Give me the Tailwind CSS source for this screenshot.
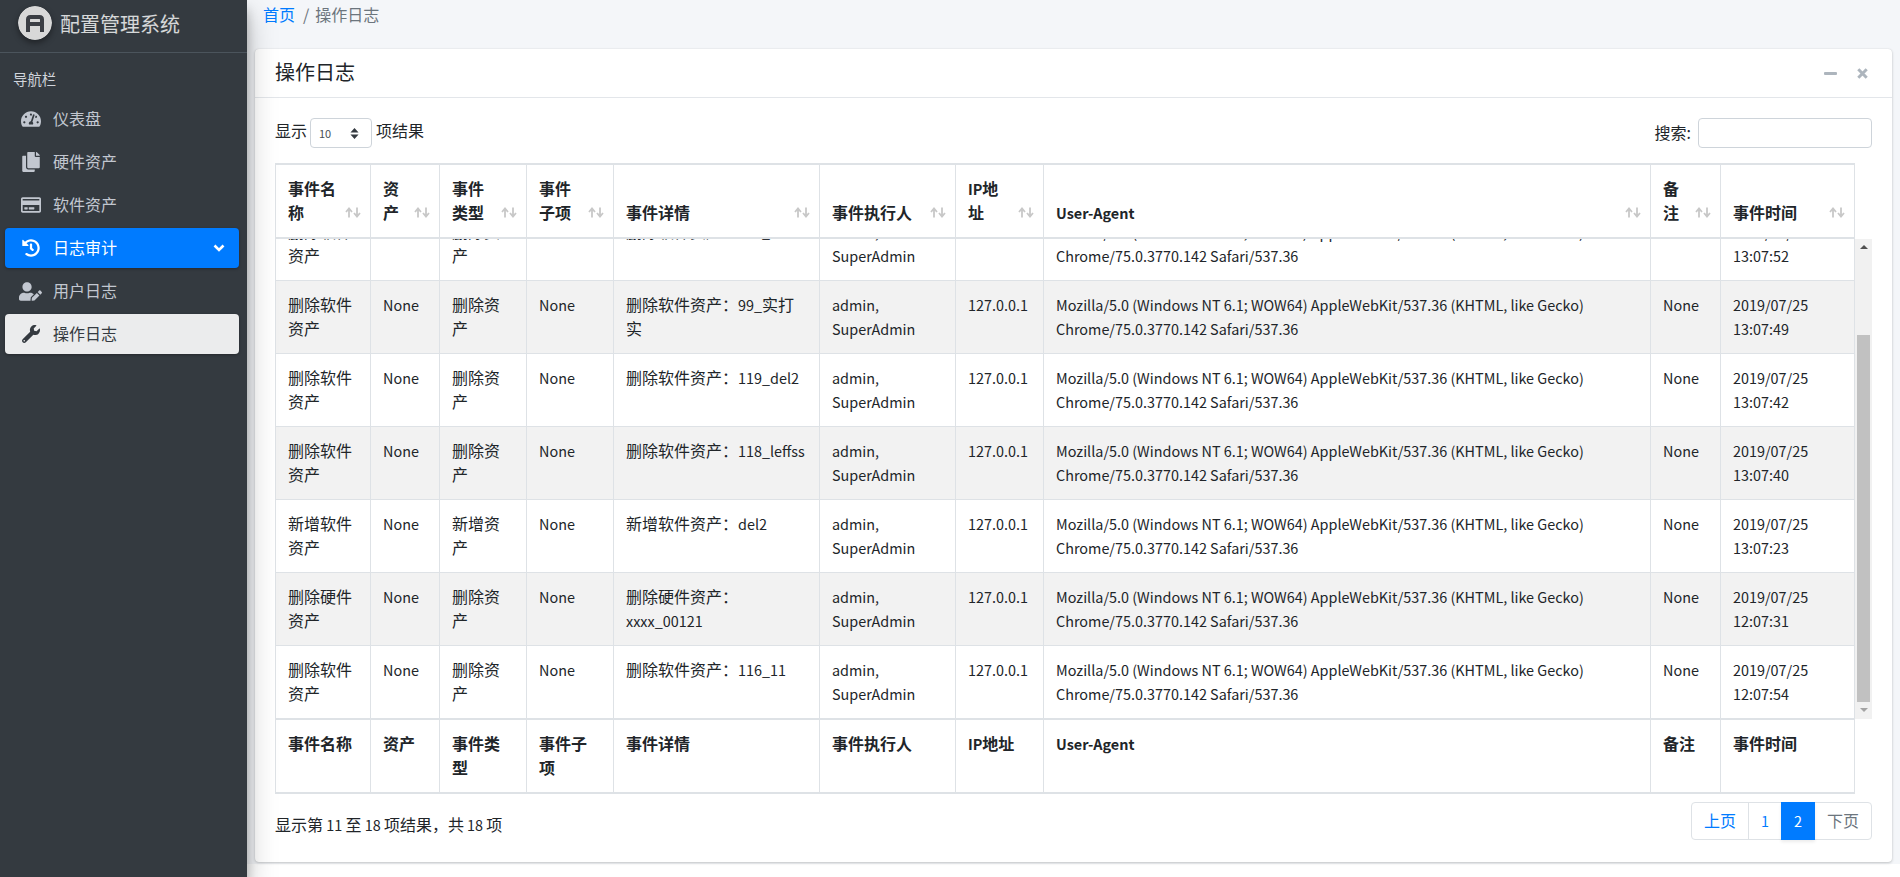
<!DOCTYPE html>
<html lang="zh">
<head>
<meta charset="utf-8">
<title>操作日志</title>
<script src="https://cdn.jsdelivr.net/npm/@tailwindcss/browser@4"></script>
</head>
<body class="bg-white">
<svg class="hidden"><symbol id="sort" viewBox="0 0 16 11"><path d="M4 10.5V2M1 5L4 1.5L7 5M12 0.5V9M9 6L12 9.5L15 6" fill="none" stroke="#c8c8c8" stroke-width="1.8"/></symbol></svg>
<div class="flex h-[877px] w-[1900px] overflow-hidden font-['Noto_Sans_CJK_SC',sans-serif] text-base leading-6 text-[#212529]">

  <aside class="relative z-10 h-full w-[247px] shrink-0 bg-[#343a40] shadow-[0_14px_28px_rgba(0,0,0,0.25),0_10px_10px_rgba(0,0,0,0.22)]">
    <div class="flex h-[53px] items-start border-b border-[#4b545c] pl-[18px] pt-[6px]">
      <svg viewBox="0 0 34 34" class="h-[34px] w-[34px] shrink-0 rounded-full shadow-[0_3px_6px_rgba(0,0,0,0.4)]">
        <circle cx="17" cy="17" r="17" fill="#d8d8d8"/>
        <path d="M10 26V13.5Q10 11 12.5 11H21.5Q24 11 24 13.5V26M10 18H24" fill="none" stroke="#3b3e44" stroke-width="4"/>
      </svg>
      <span class="ml-2 mt-[3px] text-xl leading-[30px] text-white/80">配置管理系统</span>
    </div>
    <div class="pl-[13px] pt-[15px] text-[14.4px] leading-[22px] text-[#d0d4db]">导航栏</div>
    <nav class="mt-[9px] pl-[5px] pr-[8px] text-[#c2c7d0]">
      <a class="mb-[3px] flex h-10 items-center rounded">
        <span class="flex w-[48px] justify-center pl-[3px]"><svg viewBox="0 0 576 512" class="h-[18px] w-[20px] fill-current"><path d="M288 32C128.94 32 0 160.94 0 320c0 52.8 14.25 102.26 39.06 144.8 5.61 9.62 16.3 15.2 27.44 15.2h443c11.14 0 21.83-5.58 27.44-15.2C561.75 422.26 576 372.8 576 320c0-159.06-128.94-288-288-288zm0 64c14.71 0 26.58 10.13 30.32 23.65-1.11 2.26-2.64 4.23-3.45 6.67l-9.22 27.67c-5.13 3.49-10.97 6.01-17.64 6.01-17.67 0-32-14.33-32-32S270.33 96 288 96zM96 384c-17.67 0-32-14.33-32-32s14.33-32 32-32 32 14.33 32 32-14.33 32-32 32zm48-160c-17.67 0-32-14.33-32-32s14.33-32 32-32 32 14.33 32 32-14.33 32-32 32zm246.77-72.41l-61.33 184C343.13 347.33 352 364.54 352 384c0 11.72-3.38 22.55-8.88 32H232.88c-5.5-9.45-8.88-20.28-8.88-32 0-33.94 26.5-61.43 59.9-63.59l61.34-184.01c4.17-12.56 17.73-19.45 30.36-15.17 12.57 4.19 19.35 17.79 15.17 30.36zm14.66 57.2l15.52-46.55c3.47-1.29 7.13-2.23 11.05-2.23 17.67 0 32 14.33 32 32s-14.33 32-32 32c-11.38-.01-20.89-6.28-26.57-15.22zM480 384c-17.67 0-32-14.33-32-32s14.33-32 32-32 32 14.33 32 32-14.33 32-32 32z"/></svg></span>
        <span class="pb-[2px]">仪表盘</span>
      </a>
      <a class="mb-[3px] flex h-10 items-center rounded">
        <span class="flex w-[48px] justify-center pl-[3px]"><svg viewBox="0 0 448 512" class="h-[20px] w-[18px] fill-current"><path d="M320 448v40c0 13.255-10.745 24-24 24H24c-13.255 0-24-10.745-24-24V120c0-13.255 10.745-24 24-24h72v296c0 30.879 25.121 56 56 56h168zm0-344V0H152c-13.255 0-24 10.745-24 24v368c0 13.255 10.745 24 24 24h272c13.255 0 24-10.745 24-24V128H344c-13.2 0-24-10.8-24-24zm120.971-31.029L375.029 7.029A24 24 0 0 0 358.059 0H352v96h96v-6.059a24 24 0 0 0-7.029-16.97z"/></svg></span>
        <span class="pb-[2px]">硬件资产</span>
      </a>
      <a class="mb-[3px] flex h-10 items-center rounded">
        <span class="flex w-[48px] justify-center pl-[3px]"><svg viewBox="0 0 576 512" class="h-[18px] w-[20px] fill-current"><path d="M527.9 32H48.1C21.5 32 0 53.5 0 80v352c0 26.5 21.5 48 48.1 48h479.8c26.6 0 48.1-21.5 48.1-48V80c0-26.5-21.5-48-48.1-48zM54.1 80h467.8c3.3 0 6 2.7 6 6v42H48.1V86c0-3.3 2.7-6 6-6zm467.8 352H54.1c-3.3 0-6-2.7-6-6V256h479.8v170c0 3.3-2.7 6-6 6zM192 332v40c0 6.6-5.4 12-12 12h-72c-6.6 0-12-5.4-12-12v-40c0-6.6 5.4-12 12-12h72c6.6 0 12 5.4 12 12zm192 0v40c0 6.6-5.4 12-12 12H236c-6.6 0-12-5.4-12-12v-40c0-6.6 5.4-12 12-12h136c6.6 0 12 5.4 12 12z"/></svg></span>
        <span class="pb-[2px]">软件资产</span>
      </a>
      <a class="mb-[3px] flex h-10 items-center rounded bg-[#007bff] text-white shadow-[0_1px_3px_rgba(0,0,0,0.3)]">
        <span class="flex w-[48px] justify-center pl-[3px]"><svg viewBox="0 0 512 512" class="h-[18px] w-[18px] fill-current"><path d="M504 255.531c.253 136.64-111.18 248.372-247.82 248.468-59.015.042-113.223-20.53-155.822-54.911-11.077-8.94-11.905-25.541-1.839-35.607l11.267-11.267c8.609-8.609 22.353-9.551 31.891-1.984C173.062 425.135 212.781 440 256 440c101.705 0 184-82.311 184-184 0-101.705-82.311-184-184-184-48.814 0-93.149 18.969-126.068 49.932l50.754 50.754c10.08 10.08 2.941 27.314-11.313 27.314H24c-8.837 0-16-7.163-16-16V38.627c0-14.254 17.234-21.393 27.314-11.314l49.372 49.372C129.209 34.136 189.552 8 256 8c136.81 0 247.747 110.78 248 247.531zm-180.912 78.784l9.823-12.63c8.138-10.463 6.253-25.542-4.21-33.679L288 256.349V152c0-13.255-10.745-24-24-24h-16c-13.255 0-24 10.745-24 24v135.651l65.409 50.874c10.463 8.137 25.541 6.253 33.679-4.21z"/></svg></span>
        <span class="flex-1 pb-[2px]">日志审计</span>
        <svg viewBox="0 0 12 8" class="mr-[14px] h-[8px] w-[12px]"><path d="M1.5 1.5L6 6L10.5 1.5" fill="none" stroke="#fff" stroke-width="2.6"/></svg>
      </a>
      <a class="mb-[3px] mt-px flex h-10 items-center rounded">
        <span class="flex w-[48px] justify-center pl-[3px]"><svg viewBox="0 0 640 512" class="h-[19px] w-[23px] fill-current"><path d="M224 256c70.7 0 128-57.3 128-128S294.7 0 224 0 96 57.3 96 128s57.3 128 128 128zm89.6 32h-16.7c-22.2 10.2-46.9 16-72.9 16s-50.6-5.8-72.9-16h-16.7C60.2 288 0 348.2 0 422.4V464c0 26.5 21.5 48 48 48h274.9c-2.4-6.8-3.4-14-2.6-21.3l6.8-60.9 1.2-11.1 7.9-7.9 77.3-77.3c-24.5-27.7-60-45.5-99.9-45.5zm45.3 145.3l-6.8 61c-1.1 10.2 7.5 18.8 17.6 17.6l60.9-6.8 137.9-137.9-71.7-71.7-137.9 137.8zM633 268.9L595.1 231c-9.3-9.3-24.5-9.3-33.8 0l-37.8 37.8-4.1 4.1 71.8 71.7 41.8-41.8c9.3-9.4 9.3-24.5 0-33.9z"/></svg></span>
        <span class="pb-[2px]">用户日志</span>
      </a>
      <a class="flex h-10 items-center rounded bg-[#ebeced] text-[#343a40] shadow-[0_1px_3px_rgba(0,0,0,0.3)]">
        <span class="flex w-[48px] justify-center pl-[3px]"><svg viewBox="0 0 512 512" class="h-[18px] w-[18px] fill-current"><path d="M507.73 109.1c-2.24-9.03-13.54-12.09-20.12-5.51l-74.36 74.36-67.88-11.31-11.31-67.88 74.36-74.36c6.62-6.62 3.43-17.9-5.66-20.16-47.38-11.74-99.55.91-136.58 37.93-39.64 39.64-50.55 97.1-34.05 147.2L18.74 402.76c-24.99 24.99-24.99 65.51 0 90.5 24.99 24.99 65.51 24.99 90.5 0l213.21-213.21c50.12 16.71 107.47 5.68 147.37-34.22 37.07-37.07 49.7-89.32 37.91-136.73zM64 472c-13.25 0-24-10.75-24-24 0-13.26 10.75-24 24-24s24 10.74 24 24c0 13.25-10.75 24-24 24z"/></svg></span>
        <span class="pb-[2px]">操作日志</span>
      </a>
    </nav>
  </aside>

  <main class="flex-1">
    <div class="h-[864px] bg-[#f4f6f9] px-2">
      <div class="flex h-[49px] items-start gap-2 pl-2 pt-[2px]">
        <a class="text-[#007bff]">首页</a>
        <span class="-mr-[2px] text-[#6c757d]">/</span>
        <span class="text-[#6c757d]">操作日志</span>
      </div>

      <section class="rounded bg-white shadow-[0_0_1px_rgba(0,0,0,0.125),0_1px_3px_rgba(0,0,0,0.2)]">
        <header class="flex h-[49px] items-center justify-between border-b border-[#e3e6ea] px-5">
          <h1 class="pb-[2px] text-xl leading-[30px]">操作日志</h1>
          <div class="flex items-center gap-5 pr-[4px]">
            <svg viewBox="0 0 13 3" class="h-[3px] w-[13px]"><rect width="13" height="3" rx="1" fill="#adb5bd"/></svg>
            <svg viewBox="0 0 11 11" class="h-[11px] w-[11px]"><path d="M1.3 1.3L9.7 9.7M9.7 1.3L1.3 9.7" stroke="#adb5bd" stroke-width="3" fill="none"/></svg>
          </div>
        </header>

        <div class="px-5 pb-[22px] pt-5">
          <div class="flex h-[30px] justify-between">
            <div class="flex h-6 items-center">
              <span>显示</span>
              <div class="relative ml-[3px] mr-[4px] mt-[6px] flex h-[30px] w-[62px] items-center rounded border border-[#ced4da] pl-[8px] text-[11px] text-[#495057]">
                10
                <svg viewBox="0 0 10 12" class="absolute right-[12px] top-[9px] h-[11px] w-[9px]"><path d="M5 0L9.5 5H0.5ZM5 12L0.5 7H9.5Z" fill="#343a40"/></svg>
              </div>
              <span>项结果</span>
            </div>
            <div class="flex items-center">
              <span class="pb-[2px]">搜索:</span>
              <div class="ml-[7px] h-[30px] w-[174px] rounded border border-[#ced4da] bg-white"></div>
            </div>
          </div>

          <div class="mt-[15px] w-[1597px]">
            <table class="w-[1580px] table-fixed border-separate border-spacing-0 font-bold [&_span]:text-[14.4px] [&_span]:leading-none [&_th]:relative [&_th]:border-b-2 [&_th]:border-r [&_th]:border-t-2 [&_th]:border-[#dee2e6] [&_th]:pb-[13px] [&_th]:pl-3 [&_th]:pr-[30px] [&_th]:pt-[11px] [&_th]:text-left [&_th]:align-bottom [&_th:first-child]:border-l [&_th>svg]:absolute [&_th>svg]:bottom-[19px] [&_th>svg]:right-[9px] [&_th>svg]:h-[11px] [&_th>svg]:w-[16px]">
              <colgroup><col class="w-[96px]"><col class="w-[69px]"><col class="w-[87px]"><col class="w-[87px]"><col class="w-[206px]"><col class="w-[136px]"><col class="w-[88px]"><col class="w-[607px]"><col class="w-[70px]"><col class="w-[134px]"></colgroup>
              <thead>
                <tr>
                  <th>事件名称<svg><use href="#sort"/></svg></th>
                  <th>资产<svg><use href="#sort"/></svg></th>
                  <th>事件类型<svg><use href="#sort"/></svg></th>
                  <th>事件子项<svg><use href="#sort"/></svg></th>
                  <th>事件详情<svg><use href="#sort"/></svg></th>
                  <th>事件执行人<svg><use href="#sort"/></svg></th>
                  <th><span>IP</span>地址<svg><use href="#sort"/></svg></th>
                  <th><span>User-Agent</span><svg><use href="#sort"/></svg></th>
                  <th>备注<svg><use href="#sort"/></svg></th>
                  <th>事件时间<svg><use href="#sort"/></svg></th>
                </tr>
              </thead>
            </table>

            <div class="flex h-[480px]">
              <div class="h-[480px] w-[1580px] overflow-hidden">
                <table class="-mt-[31px] w-[1580px] table-fixed border-separate border-spacing-0 [&_span]:text-[14.4px] [&_span]:leading-none [&_td]:border-b [&_td]:border-r [&_td]:border-[#dee2e6] [&_td]:pb-[13px] [&_td]:pl-3 [&_td]:pr-3 [&_td]:pt-[11px] [&_td]:align-top [&_td:first-child]:border-l">
                  <colgroup><col class="w-[96px]"><col class="w-[69px]"><col class="w-[87px]"><col class="w-[87px]"><col class="w-[206px]"><col class="w-[136px]"><col class="w-[88px]"><col class="w-[607px]"><col class="w-[70px]"><col class="w-[134px]"></colgroup>
                  <tbody>
                    <tr>
                      <td>删除软件资产</td><td><span>None</span></td><td>删除资产</td><td><span>None</span></td><td>删除软件资产：<span>120_test</span></td><td><span>admin, SuperAdmin</span></td><td><span>127.0.0.1</span></td><td><span>Mozilla/5.0 (Windows NT 6.1; WOW64) AppleWebKit/537.36 (KHTML, like Gecko) Chrome/75.0.3770.142 Safari/537.36</span></td><td><span>None</span></td><td><span>2019/07/25 13:07:52</span></td>
                    </tr>
                    <tr class="bg-[#f2f2f2]">
                      <td>删除软件资产</td><td><span>None</span></td><td>删除资产</td><td><span>None</span></td><td>删除软件资产：<span>99_</span>实打实</td><td><span>admin, SuperAdmin</span></td><td><span>127.0.0.1</span></td><td><span>Mozilla/5.0 (Windows NT 6.1; WOW64) AppleWebKit/537.36 (KHTML, like Gecko) Chrome/75.0.3770.142 Safari/537.36</span></td><td><span>None</span></td><td><span>2019/07/25 13:07:49</span></td>
                    </tr>
                    <tr>
                      <td>删除软件资产</td><td><span>None</span></td><td>删除资产</td><td><span>None</span></td><td>删除软件资产：<span>119_del2</span></td><td><span>admin, SuperAdmin</span></td><td><span>127.0.0.1</span></td><td><span>Mozilla/5.0 (Windows NT 6.1; WOW64) AppleWebKit/537.36 (KHTML, like Gecko) Chrome/75.0.3770.142 Safari/537.36</span></td><td><span>None</span></td><td><span>2019/07/25 13:07:42</span></td>
                    </tr>
                    <tr class="bg-[#f2f2f2]">
                      <td>删除软件资产</td><td><span>None</span></td><td>删除资产</td><td><span>None</span></td><td>删除软件资产：<span>118_leffss</span></td><td><span>admin, SuperAdmin</span></td><td><span>127.0.0.1</span></td><td><span>Mozilla/5.0 (Windows NT 6.1; WOW64) AppleWebKit/537.36 (KHTML, like Gecko) Chrome/75.0.3770.142 Safari/537.36</span></td><td><span>None</span></td><td><span>2019/07/25 13:07:40</span></td>
                    </tr>
                    <tr>
                      <td>新增软件资产</td><td><span>None</span></td><td>新增资产</td><td><span>None</span></td><td>新增软件资产：<span>del2</span></td><td><span>admin, SuperAdmin</span></td><td><span>127.0.0.1</span></td><td><span>Mozilla/5.0 (Windows NT 6.1; WOW64) AppleWebKit/537.36 (KHTML, like Gecko) Chrome/75.0.3770.142 Safari/537.36</span></td><td><span>None</span></td><td><span>2019/07/25 13:07:23</span></td>
                    </tr>
                    <tr class="bg-[#f2f2f2]">
                      <td>删除硬件资产</td><td><span>None</span></td><td>删除资产</td><td><span>None</span></td><td>删除硬件资产： <span>xxxx_00121</span></td><td><span>admin, SuperAdmin</span></td><td><span>127.0.0.1</span></td><td><span>Mozilla/5.0 (Windows NT 6.1; WOW64) AppleWebKit/537.36 (KHTML, like Gecko) Chrome/75.0.3770.142 Safari/537.36</span></td><td><span>None</span></td><td><span>2019/07/25 12:07:31</span></td>
                    </tr>
                    <tr>
                      <td>删除软件资产</td><td><span>None</span></td><td>删除资产</td><td><span>None</span></td><td>删除软件资产：<span>116_11</span></td><td><span>admin, SuperAdmin</span></td><td><span>127.0.0.1</span></td><td><span>Mozilla/5.0 (Windows NT 6.1; WOW64) AppleWebKit/537.36 (KHTML, like Gecko) Chrome/75.0.3770.142 Safari/537.36</span></td><td><span>None</span></td><td><span>2019/07/25 12:07:54</span></td>
                    </tr>
                  </tbody>
                </table>
              </div>
              <div class="flex h-[480px] w-[17px] flex-col items-center bg-[#f1f1f1]">
                <svg viewBox="0 0 8 4" class="mt-[6px] h-[4px] w-[8px]"><path d="M4 0L8 4H0Z" fill="#505050"/></svg>
                <div class="mt-[86px] h-[367px] w-[13px] bg-[#c1c1c1]"></div>
                <svg viewBox="0 0 8 4" class="mt-[6px] h-[4px] w-[8px]"><path d="M4 4L0 0H8Z" fill="#a3a3a3"/></svg>
              </div>
            </div>

            <table class="w-[1580px] table-fixed border-separate border-spacing-0 font-bold [&_span]:text-[14.4px] [&_span]:leading-none [&_th]:border-b-2 [&_th]:border-r [&_th]:border-t [&_th]:border-[#dee2e6] [&_th]:pb-[13px] [&_th]:pl-3 [&_th]:pr-3 [&_th]:pt-[11px] [&_th]:text-left [&_th]:align-top [&_th:first-child]:border-l">
              <colgroup><col class="w-[96px]"><col class="w-[69px]"><col class="w-[87px]"><col class="w-[87px]"><col class="w-[206px]"><col class="w-[136px]"><col class="w-[88px]"><col class="w-[607px]"><col class="w-[70px]"><col class="w-[134px]"></colgroup>
              <tfoot>
                <tr>
                  <th>事件名称</th><th>资产</th><th>事件类型</th><th>事件子项</th><th>事件详情</th><th>事件执行人</th><th><span>IP</span>地址</th><th><span>User-Agent</span></th><th>备注</th><th>事件时间</th>
                </tr>
              </tfoot>
            </table>
          </div>

          <div class="mt-2 flex h-[38px] items-start justify-between">
            <div class="pt-[10px] [&_span]:text-[14.4px] [&_span]:leading-none">显示第<span> 11 </span>至<span> 18 </span>项结果，共<span> 18 </span>项</div>
            <div class="flex h-[38px] rounded border border-[#dee2e6] text-center">
              <a class="w-[57px] border-r border-[#dee2e6] leading-[34px] text-[#007bff]">上页</a>
              <a class="w-[32px] text-[14.4px] leading-[36px] text-[#007bff]">1</a>
              <a class="-my-px w-[34px] bg-[#007bff] text-[14.4px] leading-[38px] text-white shadow-[0_2px_3px_rgba(0,0,0,0.08)]">2</a>
              <a class="w-[56px] leading-[34px] text-[#6c757d]">下页</a>
            </div>
          </div>
        </div>
      </section>
    </div>
  </main>
</div>
</body>
</html>
